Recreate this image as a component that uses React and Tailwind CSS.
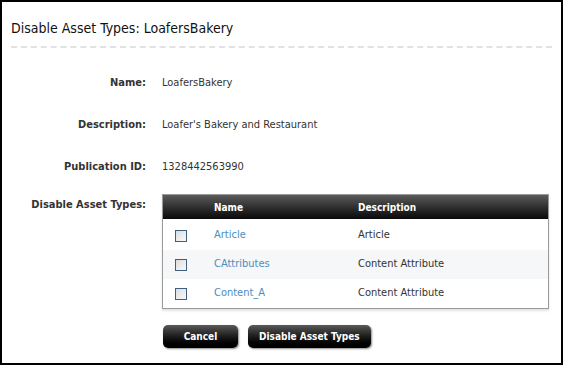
const rows = [
  { name: "Article", desc: "Article" },
  { name: "CAttributes", desc: "Content Attribute" },
  { name: "Content_A", desc: "Content Attribute" },
];

const Field = ({ label, children }) => (
  <div className="flex items-center h-[14px]">
    <div className="w-[144px] text-right font-bold text-[11px] text-[#333]">{label}</div>
    <div className="ml-4 text-[11px] text-[#333]">{children}</div>
  </div>
);

const Button = ({ children }) => (
  <button className="h-[23px] px-[11px] rounded-[5px] bg-gradient-to-b from-[#5a5a5a] via-[#1c1c1c] to-[#000] text-white font-bold text-[10px] shadow-[1px_1px_2px_rgba(0,0,0,0.45)]">
    {children}
  </button>
);

export default function App() {
  return (
    <div
      className="w-[563px] h-[365px] border-2 border-black bg-white overflow-hidden"
      style={{ fontFamily: "'DejaVu Sans Condensed', 'DejaVu Sans', sans-serif" }}
    >
      <div className="pt-[18px] px-[9px]">
        <h1 className="text-[14px] text-[#111] leading-[17px]">Disable Asset Types: LoafersBakery</h1>
        <div className="mt-[9px] border-t-2 border-dashed border-[#e2e2e2]" />
      </div>

      <div className="mt-[28px] flex flex-col gap-[28px]">
        <Field label="Name:">LoafersBakery</Field>
        <Field label="Description:">Loafer's Bakery and Restaurant</Field>
        <Field label="Publication ID:">1328442563990</Field>
      </div>

      <div className="mt-[20px] flex">
        <div className="w-[144px] text-right font-bold text-[11px] text-[#333] pt-[3px]">Disable Asset Types:</div>
        <div className="ml-[16px] w-[387px]">
          <div className="border border-[#9a9a9a] shadow-[0_2px_2px_rgba(200,210,220,0.6)]">
            <div className="flex items-center h-[24px] bg-gradient-to-b from-[#5c5c5c] to-[#0a0a0a] text-white font-bold text-[10px]">
              <div className="w-[51px]" />
              <div className="w-[144px]">Name</div>
              <div>Description</div>
            </div>
            {rows.map((r, i) => (
              <div
                key={r.name}
                className={`flex items-center text-[11px] ${i === 0 ? "h-[31px] pt-[2px]" : "h-[29px]"} ${i === 1 ? "bg-[#f5f7f9]" : "bg-white"}`}
              >
                <div className="w-[51px] pl-[12px]">
                  <div className="w-[12px] h-[12px] border border-[#3c5f82] bg-gradient-to-br from-[#dcdcdc] to-[#fafafa]" />
                </div>
                <div className="w-[144px] text-[#4a8ec2]">{r.name}</div>
                <div className="text-[#333]">{r.desc}</div>
              </div>
            ))}
          </div>
          <div className="mt-[16px] flex gap-[10px] pl-[1px]">
            <div className="w-[75px] flex">
              <Button>
                <span className="block w-[53px]">Cancel</span>
              </Button>
            </div>
            <Button>Disable Asset Types</Button>
          </div>
        </div>
      </div>
    </div>
  );
}
